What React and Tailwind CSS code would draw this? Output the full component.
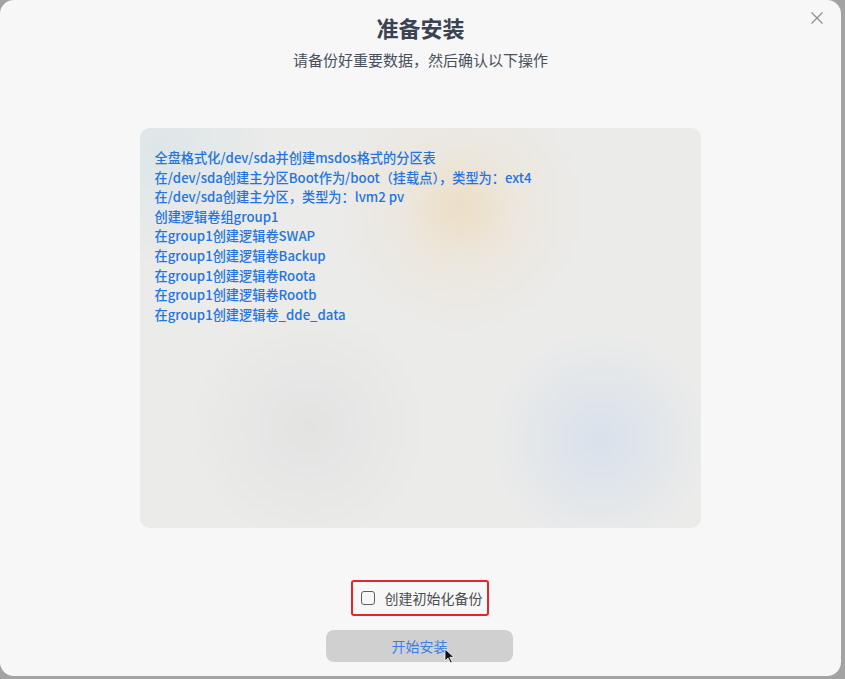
export default function App() {
  const lines = [
    "全盘格式化/dev/sda并创建msdos格式的分区表",
    "在/dev/sda创建主分区Boot作为/boot（挂载点），类型为：ext4",
    "在/dev/sda创建主分区，类型为：lvm2 pv",
    "创建逻辑卷组group1",
    "在group1创建逻辑卷SWAP",
    "在group1创建逻辑卷Backup",
    "在group1创建逻辑卷Roota",
    "在group1创建逻辑卷Rootb",
    "在group1创建逻辑卷_dde_data",
  ];
  return (
    <div className="w-[845px] h-[679px] bg-[#a3a3a3] overflow-hidden" style={{ fontFamily: '"Noto Sans CJK SC", "Noto Sans", sans-serif' }}>
      <div className="relative w-[841px] h-[676px] bg-[#f7f7f7] rounded-[14px] flex flex-col items-center">
        <button className="absolute right-[18px] top-[12px] text-[#8a8a8a]">
          <svg width="12" height="12" viewBox="0 0 12 12" fill="none" stroke="currentColor" strokeWidth="1.1">
            <path d="M0.5 0.5L11.5 11.5M11.5 0.5L0.5 11.5" />
          </svg>
        </button>
        <h1 className="mt-[12px] text-[22px] leading-[30px] font-bold text-[#3b4252]">准备安装</h1>
        <p className="mt-[7px] text-[15px] leading-[22px] text-[#48505c]">请备份好重要数据，然后确认以下操作</p>
        <div
          className="mt-[57px] ml-[-1px] w-[561px] h-[400px] rounded-[10px] bg-[#ebebea] pt-[20px] pl-[15px]"
          style={{
            backgroundImage:
              "radial-gradient(circle at 57% 20%, rgba(238,212,170,0.55) 0, rgba(238,220,190,0.25) 60px, rgba(235,235,234,0) 130px), radial-gradient(circle at 3% 5%, rgba(215,228,230,0.7) 0, rgba(235,235,234,0) 120px), radial-gradient(circle at 82% 78%, rgba(214,224,235,0.9) 0, rgba(235,235,234,0) 110px), radial-gradient(circle at 30% 75%, rgba(224,226,224,0.8) 0, rgba(235,235,234,0) 120px)",
          }}
        >
          {lines.map((l, i) => (
            <div key={i} className="text-[13.2px] leading-[19.6px] font-medium text-[#2474e0]">{l}</div>
          ))}
        </div>
        <div className="mt-[52px] ml-[-2px] w-[138px] h-[36px] border-2 border-[#e3262b] rounded-[3px] flex items-center pl-[8px] gap-[10px]">
          <span className="w-[14px] h-[14px] border-[1.5px] border-[#5c5f66] rounded-[3px] bg-[#f7f7f7]"></span>
          <span className="text-[14px] leading-[20px] text-[#4a4d52]">创建初始化备份</span>
        </div>
        <div className="relative mt-[14px] ml-[-2px] w-[187px] h-[32px] rounded-[8px] bg-[#d0d0d0] flex items-center justify-center text-[14px] text-[#3a7fe0]">
          开始安装
          <svg className="absolute left-[118px] top-[18px]" width="11" height="16" viewBox="0 0 11 16">
            <path d="M1 1 L1 13 L4 10 L6.5 15 L8.3 14.2 L5.8 9.3 L10 9.3 Z" fill="#111" stroke="#fff" strokeWidth="0.8" />
          </svg>
        </div>
      </div>
    </div>
  );
}
